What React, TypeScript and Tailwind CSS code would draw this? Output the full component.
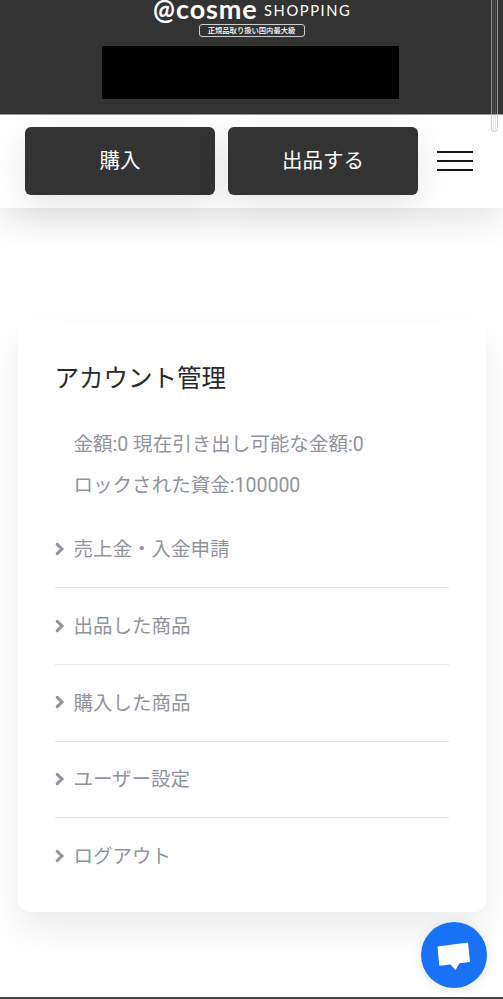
const balances = ['金額:0 現在引き出し可能な金額:0', 'ロックされた資金:100000']

const menuItems = ['売上金・入金申請', '出品した商品', '購入した商品', 'ユーザー設定', 'ログアウト']

const Chevron = () => (
  <svg viewBox="0 0 10 14" className="mr-[9px] -mt-[2px] h-[14px] w-[10px] shrink-0" fill="none">
    <path d="M2.2 2.4 L7 7 L2.2 11.6" stroke="currentColor" strokeWidth="3" strokeLinecap="round" />
  </svg>
)

const Header = () => (
  <header className="relative z-20 flex h-[114px] flex-col items-center bg-[#333] text-white">
    <div className="flex h-[24px] w-[197px] items-start whitespace-nowrap font-['Lato',sans-serif]">
      <span className="w-[23px] origin-left scale-y-[1.08] text-[26px] leading-[18px] font-bold">@</span>
      <span className="w-[88px] text-[27px] leading-[18px] font-bold tracking-[0.9px]">cosme</span>
      <span className="w-[86px] text-[14.7px] leading-[21px] tracking-[1.6px]">SHOPPING</span>
    </div>
    <div className="flex h-[13px] w-[106px] items-center justify-center whitespace-nowrap rounded-[3px] border border-[#ccc] text-[7.3px] leading-none font-medium">
      正規品取り扱い国内最大級
    </div>
    <div className="mt-[8.5px] mr-[2px] h-[53.5px] w-[297px] bg-black" />
  </header>
)

const Nav = () => (
  <nav className="relative z-10 flex h-[94px] gap-[13px] border-t border-[#999] bg-white pt-[11.5px] pl-[25px] shadow-[0_14px_36px_rgba(0,0,0,0.1)]">
    {['購入', '出品する'].map((label) => (
      <button
        key={label}
        className="h-[68.5px] w-[190px] rounded-[6px] bg-[#333] text-[20.5px] leading-[30px] text-white shadow-[0_10px_36px_rgba(0,0,0,0.1)]"
      >
        {label}
      </button>
    ))}
    <button className="mt-[24.5px] ml-[6px] flex h-[20px] w-[36px] flex-col justify-between" aria-label="menu">
      <span className="h-[2.3px] w-full bg-[#171717]" />
      <span className="h-[2.3px] w-full bg-[#171717]" />
      <span className="h-[2.3px] w-full bg-[#171717]" />
    </button>
  </nav>
)

const AccountCard = () => (
  <section className="mx-auto mt-[113px] h-[591px] w-[468px] rounded-[12px] bg-white px-[37px] pt-[38px] shadow-[0_18px_36px_rgba(0,0,0,0.08)]">
    <h1 className="text-[24.5px] leading-[40px] text-[#2b2829]">アカウント管理</h1>
    <div className="mt-[25px] pl-[19px]">
      {balances.map((line) => (
        <p key={line} className="text-[19.55px] leading-[41px]">{line}</p>
      ))}
    </div>
    <ul className="mt-[5.5px] divide-y divide-[#e5e6ea]">
      {menuItems.map((item) => (
        <li key={item} className="flex h-[76.7px] items-center pt-px text-[19.5px]">
          <Chevron />
          {item}
        </li>
      ))}
    </ul>
  </section>
)

const ChatButton = () => (
  <button
    className="absolute right-[16px] bottom-[9.5px] z-30 h-[66px] w-[66px] rounded-full bg-[#1972f5] shadow-[0_2px_12px_rgba(0,0,0,0.1)]"
    aria-label="chat"
  >
    <svg viewBox="0 0 66 66" className="h-full w-full">
      <path d="M16.5 24.5 L47 20.5 L49 40 L38.5 41.3 L34.5 48 L29.5 42.4 L18.3 43.7 Z" fill="#fff" />
    </svg>
  </button>
)

export default function App() {
  return (
    <div
      lang="ja"
      className="relative h-[999px] w-full overflow-hidden border-b-2 border-[#444] bg-white font-['Roboto','Noto_Sans_CJK_JP',sans-serif] text-[#92949e]"
    >
      <Header />
      <Nav />
      <AccountCard />
      <ChatButton />
      {/* scroll thumb */}
      <div className="absolute -top-[10px] right-[5px] z-40 h-[142px] w-[7px] rounded-full border border-[#bbb]/70 p-px">
        <div className="h-full w-full rounded-full border-x border-[#aaa]/30" />
      </div>
    </div>
  )
}
